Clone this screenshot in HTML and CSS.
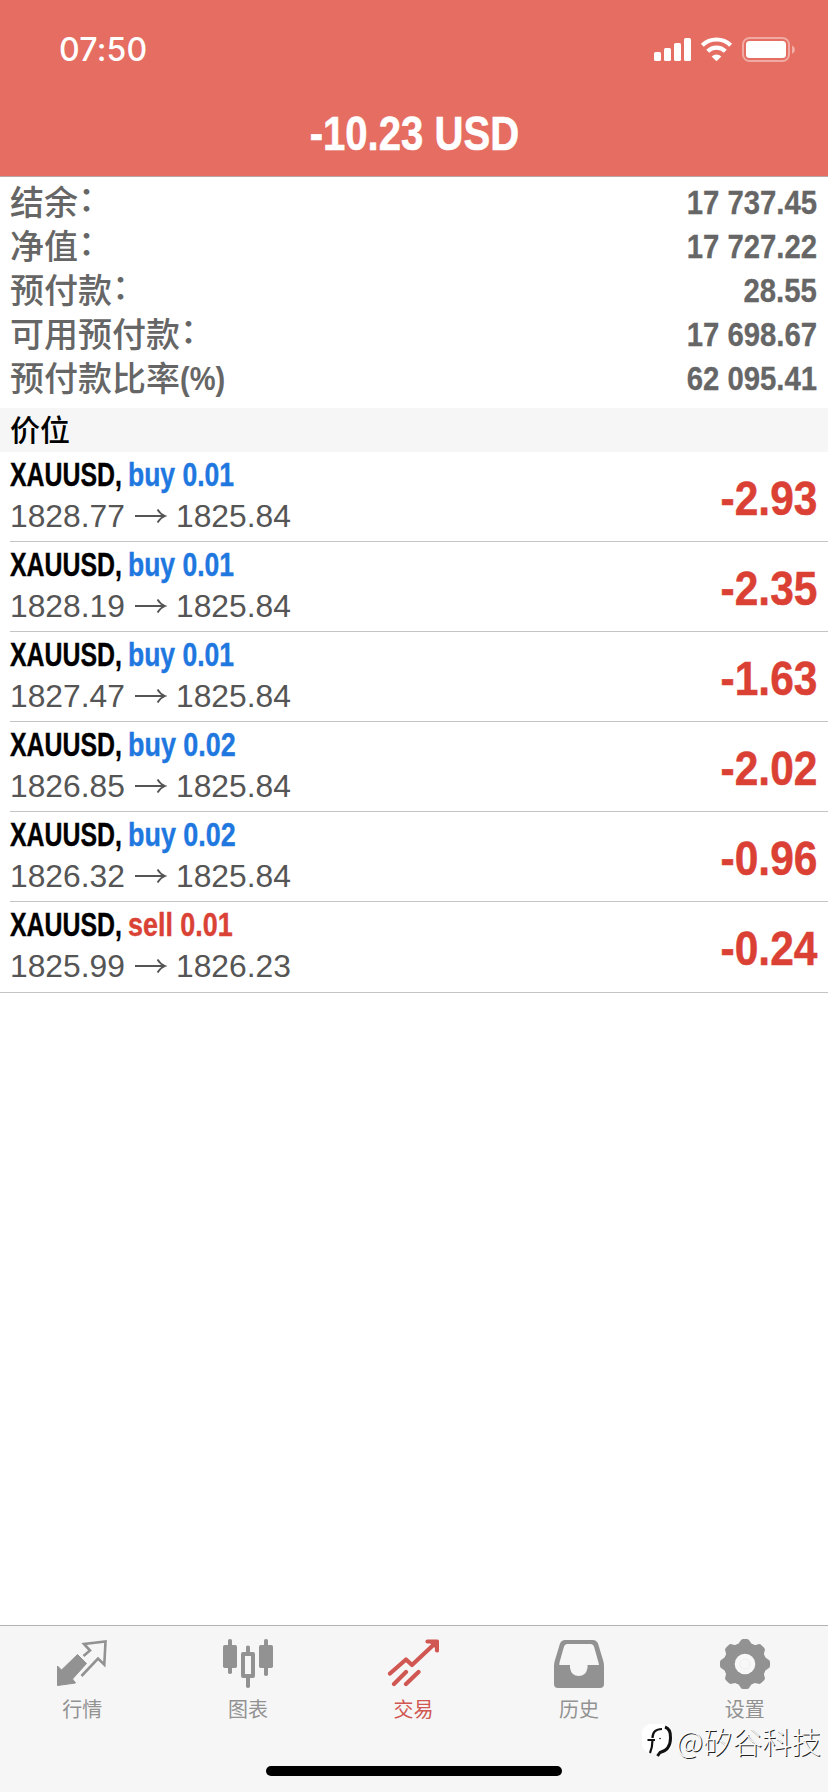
FILE: index.html
```html
<!DOCTYPE html>
<html lang="zh-CN">
<head>
<meta charset="utf-8">
<title>交易</title>
<link rel="stylesheet" href="styles.css">
</head>
<body>
<div class="screen">
  <header class="header">
    <div class="status">
      <span class="time">07:50</span>
      <svg class="status-icons" width="146" height="28" viewBox="0 0 146 28" fill="#fff">
        <rect x="3" y="16" width="7" height="9" rx="1.6"/>
        <rect x="13" y="12" width="7" height="13" rx="1.6"/>
        <rect x="23" y="7" width="7" height="18" rx="1.6"/>
        <rect x="33" y="2" width="7" height="23" rx="1.6"/>
        <g fill="none" stroke="#fff" stroke-width="4.2">
          <path d="M51.3 9.2a20.5 20.5 0 0 1 28.400 0"/>
          <path d="M56.700 15.200a12.500 12.500 0 0 1 17.600 0"/>
        </g>
        <path d="M60.600 20.400a7.500 7.500 0 0 1 9.800 0L65.500 25.300z"/>
        <rect x="92" y="2" width="46" height="23" rx="6.500" fill="none" stroke="#fff" stroke-opacity=".42" stroke-width="2"/>
        <rect x="95" y="5" width="40" height="17" rx="3.500"/>
        <path d="M141 9.500q3 1.500 3 4.300t-3 4.300z" opacity=".45"/>
      </svg>
    </div>
    <h1 class="profit"><span class="profit-text">-10.23 USD</span></h1>
  </header>

  <dl class="summary">
    <div class="line"><dt>结余<span class="colon">：</span></dt><dd>17 737.45</dd></div>
    <div class="line"><dt>净值<span class="colon">：</span></dt><dd>17 727.22</dd></div>
    <div class="line"><dt>预付款<span class="colon">：</span></dt><dd>28.55</dd></div>
    <div class="line"><dt>可用预付款<span class="colon">：</span></dt><dd>17 698.67</dd></div>
    <div class="line"><dt>预付款比率<span class="percent">(%)</span></dt><dd>62 095.41</dd></div>
  </dl>

  <h2 class="section">价位</h2>

  <ul class="positions">
    <li class="position"><div class="info"><div class="deal"><span class="symbol">XAUUSD,</span><span class="side buy">buy 0.01</span></div><div class="prices"><span>1828.77</span><svg class="arrow" viewBox="0 0 32 16"><path d="M0 8H29M22.500 1.500Q25 6 30 8Q25 10 22.500 14.500"/></svg><span>1825.84</span></div></div><span class="result">-2.93</span></li>
    <li class="position"><div class="info"><div class="deal"><span class="symbol">XAUUSD,</span><span class="side buy">buy 0.01</span></div><div class="prices"><span>1828.19</span><svg class="arrow" viewBox="0 0 32 16"><path d="M0 8H29M22.500 1.500Q25 6 30 8Q25 10 22.500 14.500"/></svg><span>1825.84</span></div></div><span class="result">-2.35</span></li>
    <li class="position"><div class="info"><div class="deal"><span class="symbol">XAUUSD,</span><span class="side buy">buy 0.01</span></div><div class="prices"><span>1827.47</span><svg class="arrow" viewBox="0 0 32 16"><path d="M0 8H29M22.500 1.500Q25 6 30 8Q25 10 22.500 14.500"/></svg><span>1825.84</span></div></div><span class="result">-1.63</span></li>
    <li class="position"><div class="info"><div class="deal"><span class="symbol">XAUUSD,</span><span class="side wide buy">buy 0.02</span></div><div class="prices"><span>1826.85</span><svg class="arrow" viewBox="0 0 32 16"><path d="M0 8H29M22.500 1.500Q25 6 30 8Q25 10 22.500 14.500"/></svg><span>1825.84</span></div></div><span class="result">-2.02</span></li>
    <li class="position"><div class="info"><div class="deal"><span class="symbol">XAUUSD,</span><span class="side wide buy">buy 0.02</span></div><div class="prices"><span>1826.32</span><svg class="arrow" viewBox="0 0 32 16"><path d="M0 8H29M22.500 1.500Q25 6 30 8Q25 10 22.500 14.500"/></svg><span>1825.84</span></div></div><span class="result">-0.96</span></li>
    <li class="position"><div class="info"><div class="deal"><span class="symbol">XAUUSD,</span><span class="side wide sell">sell 0.01</span></div><div class="prices"><span>1825.99</span><svg class="arrow" viewBox="0 0 32 16"><path d="M0 8H29M22.500 1.500Q25 6 30 8Q25 10 22.500 14.500"/></svg><span>1826.23</span></div></div><span class="result">-0.24</span></li>
  </ul>

  <footer class="footer">
    <nav class="tabs">
      <a class="tab">
        <svg class="icon" viewBox="0 0 52 52">
          <path fill="#929292" d="M21.500 16.500 30.500 25.500 16.500 41 19.500 45 1.500 47.500V28L5.500 32z" stroke="#929292" stroke-linejoin="round"/>
          <path fill="none" stroke="#929292" stroke-width="2.600" d="M27.500 18 34 12.500 28 6 49.500 3.500 48.300 26.500 42 20.500 25.500 38"/>
        </svg>
        <span>行情</span>
      </a>
      <a class="tab">
        <svg class="icon" viewBox="0 0 52 52" fill="#929292">
          <rect x="6" y="1" width="4" height="35" rx="1.800"/><rect x="1" y="7" width="14" height="23" rx="1.800"/>
          <rect x="42" y="1" width="4" height="37" rx="1.800"/><rect x="37" y="7" width="14" height="23" rx="1.800"/>
          <rect x="24" y="7.500" width="4" height="8" rx="1.800"/><rect x="24" y="38" width="4" height="12" rx="1.800"/>
          <rect x="21" y="16" width="10" height="22" fill="none" stroke="#929292" stroke-width="4" stroke-linejoin="round"/>
        </svg>
        <span>图表</span>
      </a>
      <a class="tab active">
        <svg class="icon" viewBox="0 0 52 52" fill="none" stroke="#d15752" stroke-width="4.200" stroke-linecap="round" stroke-linejoin="round">
          <path d="M3 35.500 19 21.500 25 27 49.500 4M40.500 3.500H50V12.500M19 34 7 46M31.500 34 19 46"/>
          <path stroke="none" fill="#d15752" d="M42 4H50V12z"/>
        </svg>
        <span>交易</span>
      </a>
      <a class="tab">
        <svg class="icon" viewBox="0 0 52 52" fill="#929292" fill-rule="evenodd">
          <path d="M12 2H40Q43.500 2 45 5.500L50 22Q51 25 51 28V46Q51 50 47 50H5Q1 50 1 46V28Q1 25 2 22L7 5.500Q8.500 2 12 2zM14 6Q11.800 6 11 8.500L6.500 24.500 6.300 27H17V30Q18.500 38 25.700 38T34.500 30V27H46L45.500 24.500 41 8.500Q40.200 6 38 6z"/>
        </svg>
        <span>历史</span>
      </a>
      <a class="tab">
        <svg class="icon" viewBox="0 0 52 52">
          <g fill="#929292">
            <circle cx="26" cy="26" r="21.300"/>
            <path id="pair" d="M17 7.500Q19.500 6.500 21 3.500Q22 1 24 1H28Q30 1 31 3.500Q32.500 6.500 35 7.500V44.500Q32.500 45.500 31 48.500Q30 51 28 51H24Q22 51 21 48.500Q19.500 45.500 17 44.500z"/>
            <use href="#pair" transform="rotate(45 26 26)"/>
            <use href="#pair" transform="rotate(90 26 26)"/>
            <use href="#pair" transform="rotate(135 26 26)"/>
          </g>
          <circle cx="26" cy="26" r="10.300" fill="#f8f8f8"/>
          <circle cx="26" cy="26" r="5" fill="none" stroke="#efefef"/>
        </svg>
        <span>设置</span>
      </a>
    </nav>
    <div class="home"></div>
    <div class="watermark">
      <svg width="34" height="36" viewBox="0 0 34 36">
        <rect x="0" y="2" width="30" height="29" rx="9" fill="#fff"/>
        <g fill="none" stroke="#111" stroke-width="2.200">
          <path d="M8 31Q10.500 25 10.500 18M5.500 18H13M10.500 16Q10.500 7 20 7"/>
          <path d="M23 5Q29 7 28.500 16Q28.500 28 18 30.500L15.500 34" stroke-width="3"/>
        </g>
        <circle cx="18" cy="16.500" r=".8"/>
      </svg>
      <span>@矽谷科技</span>
    </div>
  </footer>
</div>
</body>
</html>
```
FILE: styles.css
```css
* { box-sizing: border-box; margin: 0; padding: 0; }

body {
  width: 828px;
  height: 1792px;
  background: #fff;
  font-family: "Liberation Sans", "Noto Sans CJK SC", sans-serif;
  overflow: hidden;
}

.screen {
  display: flex;
  flex-direction: column;
  width: 828px;
  height: 1792px;
}

.header {
  height: 177px;
  background: #e56d61;
  border-bottom: 1px solid #b9a5a2;
  color: #fff;
}

.status {
  display: flex;
  justify-content: space-between;
  align-items: center;
  height: 100px;
  padding: 0 31px 0 59px;
}

.time {
  font: 500 32px/40px Inter, sans-serif;
  letter-spacing: 0.2px;
}

.status-icons { display: block; }

.profit {
  height: 68px;
  text-align: center;
  font-size: 48px;
  line-height: 67px;
}

.profit-text {
  display: inline-block;
  transform: scaleX(0.835);
  -webkit-text-stroke: 0.6px currentColor;
}

.summary { height: 231px; padding: 4px 11px 0 10px; color: #666; }

.line {
  display: flex;
  justify-content: space-between;
  height: 44px;
  line-height: 44px;
}

.line dt {
  display: flex;
  font-family: "Noto Sans CJK SC", sans-serif;
  font-size: 34px;
  font-weight: 500;
  line-height: 40px;
}

.colon { line-height: 31px; }

.percent {
  font-family: "Liberation Sans", sans-serif;
  font-weight: 700;
  font-size: 33px;
  line-height: 43px;
  transform: scaleX(0.88);
  transform-origin: left;
}

.line dd {
  font-size: 33.500px;
  font-weight: 700;
  transform: scaleX(0.875);
  transform-origin: right;
  -webkit-text-stroke: 0.3px currentColor;
}

.section {
  height: 44px;
  padding-left: 10px;
  background: #f6f6f6;
  font: 500 30px/41px "Noto Sans CJK SC", sans-serif;
}

.positions { list-style: none; border-bottom: 1px solid #c4c4c6; }

.position {
  display: flex;
  justify-content: space-between;
  height: 90px;
  margin-left: 10px;
  padding-right: 11px;
  border-bottom: 1px solid #c4c4c6;
}

.position:last-child { border-bottom: 0; }

.info { padding-top: 1px; }

.deal {
  display: flex;
  height: 44px;
  font-size: 32.500px;
  font-weight: 700;
  line-height: 44px;
  white-space: nowrap;
  -webkit-text-stroke: 0.4px currentColor;
}

.symbol { width: 118px; transform: scaleX(0.765); transform-origin: left; }
.symbol, .side { display: block; }
.side { transform: scaleX(0.815); transform-origin: left; }
.side.wide { transform: scaleX(0.828); }
.buy { color: #1f78e0; }
.sell { color: #da4236; }

.prices {
  display: flex;
  align-items: center;
  height: 38px;
  font-size: 31.800px;
  line-height: 38px;
  color: #555;
}

.arrow {
  width: 32px;
  height: 16px;
  margin: 0 9px 0 10px;
  fill: none;
  stroke: #555;
  stroke-width: 1.800;
}

.result {
  font-size: 48px;
  font-weight: 700;
  line-height: 94px;
  color: #db4035;
  transform: scaleX(0.885);
  transform-origin: right;
  -webkit-text-stroke: 0.5px currentColor;
}

.footer {
  position: relative;
  height: 167px;
  margin-top: auto;
  background: #f6f6f6;
  border-top: 1px solid #b2b2b2;
}

.tabs { display: flex; }

.tab {
  display: flex;
  flex: 1;
  flex-direction: column;
  align-items: center;
  padding: 12px 1px 0 0;
  font: 400 20px/30px "Noto Sans CJK SC", sans-serif;
  color: #929292;
}

.active { color: #d15752; }

.icon { width: 52px; height: 52px; margin-bottom: 4px; }

.home {
  width: 296px;
  height: 10px;
  margin: 42px auto 0;
  border-radius: 5px;
  background: #000;
}

.watermark {
  position: absolute;
  right: 7px;
  top: 94px;
  display: flex;
  align-items: center;
  font: 300 29.500px/40px "Noto Sans CJK SC", sans-serif;
  color: #fafafa;
  text-shadow: 1px 1px 0.5px #222;
  white-space: nowrap;
}
```
